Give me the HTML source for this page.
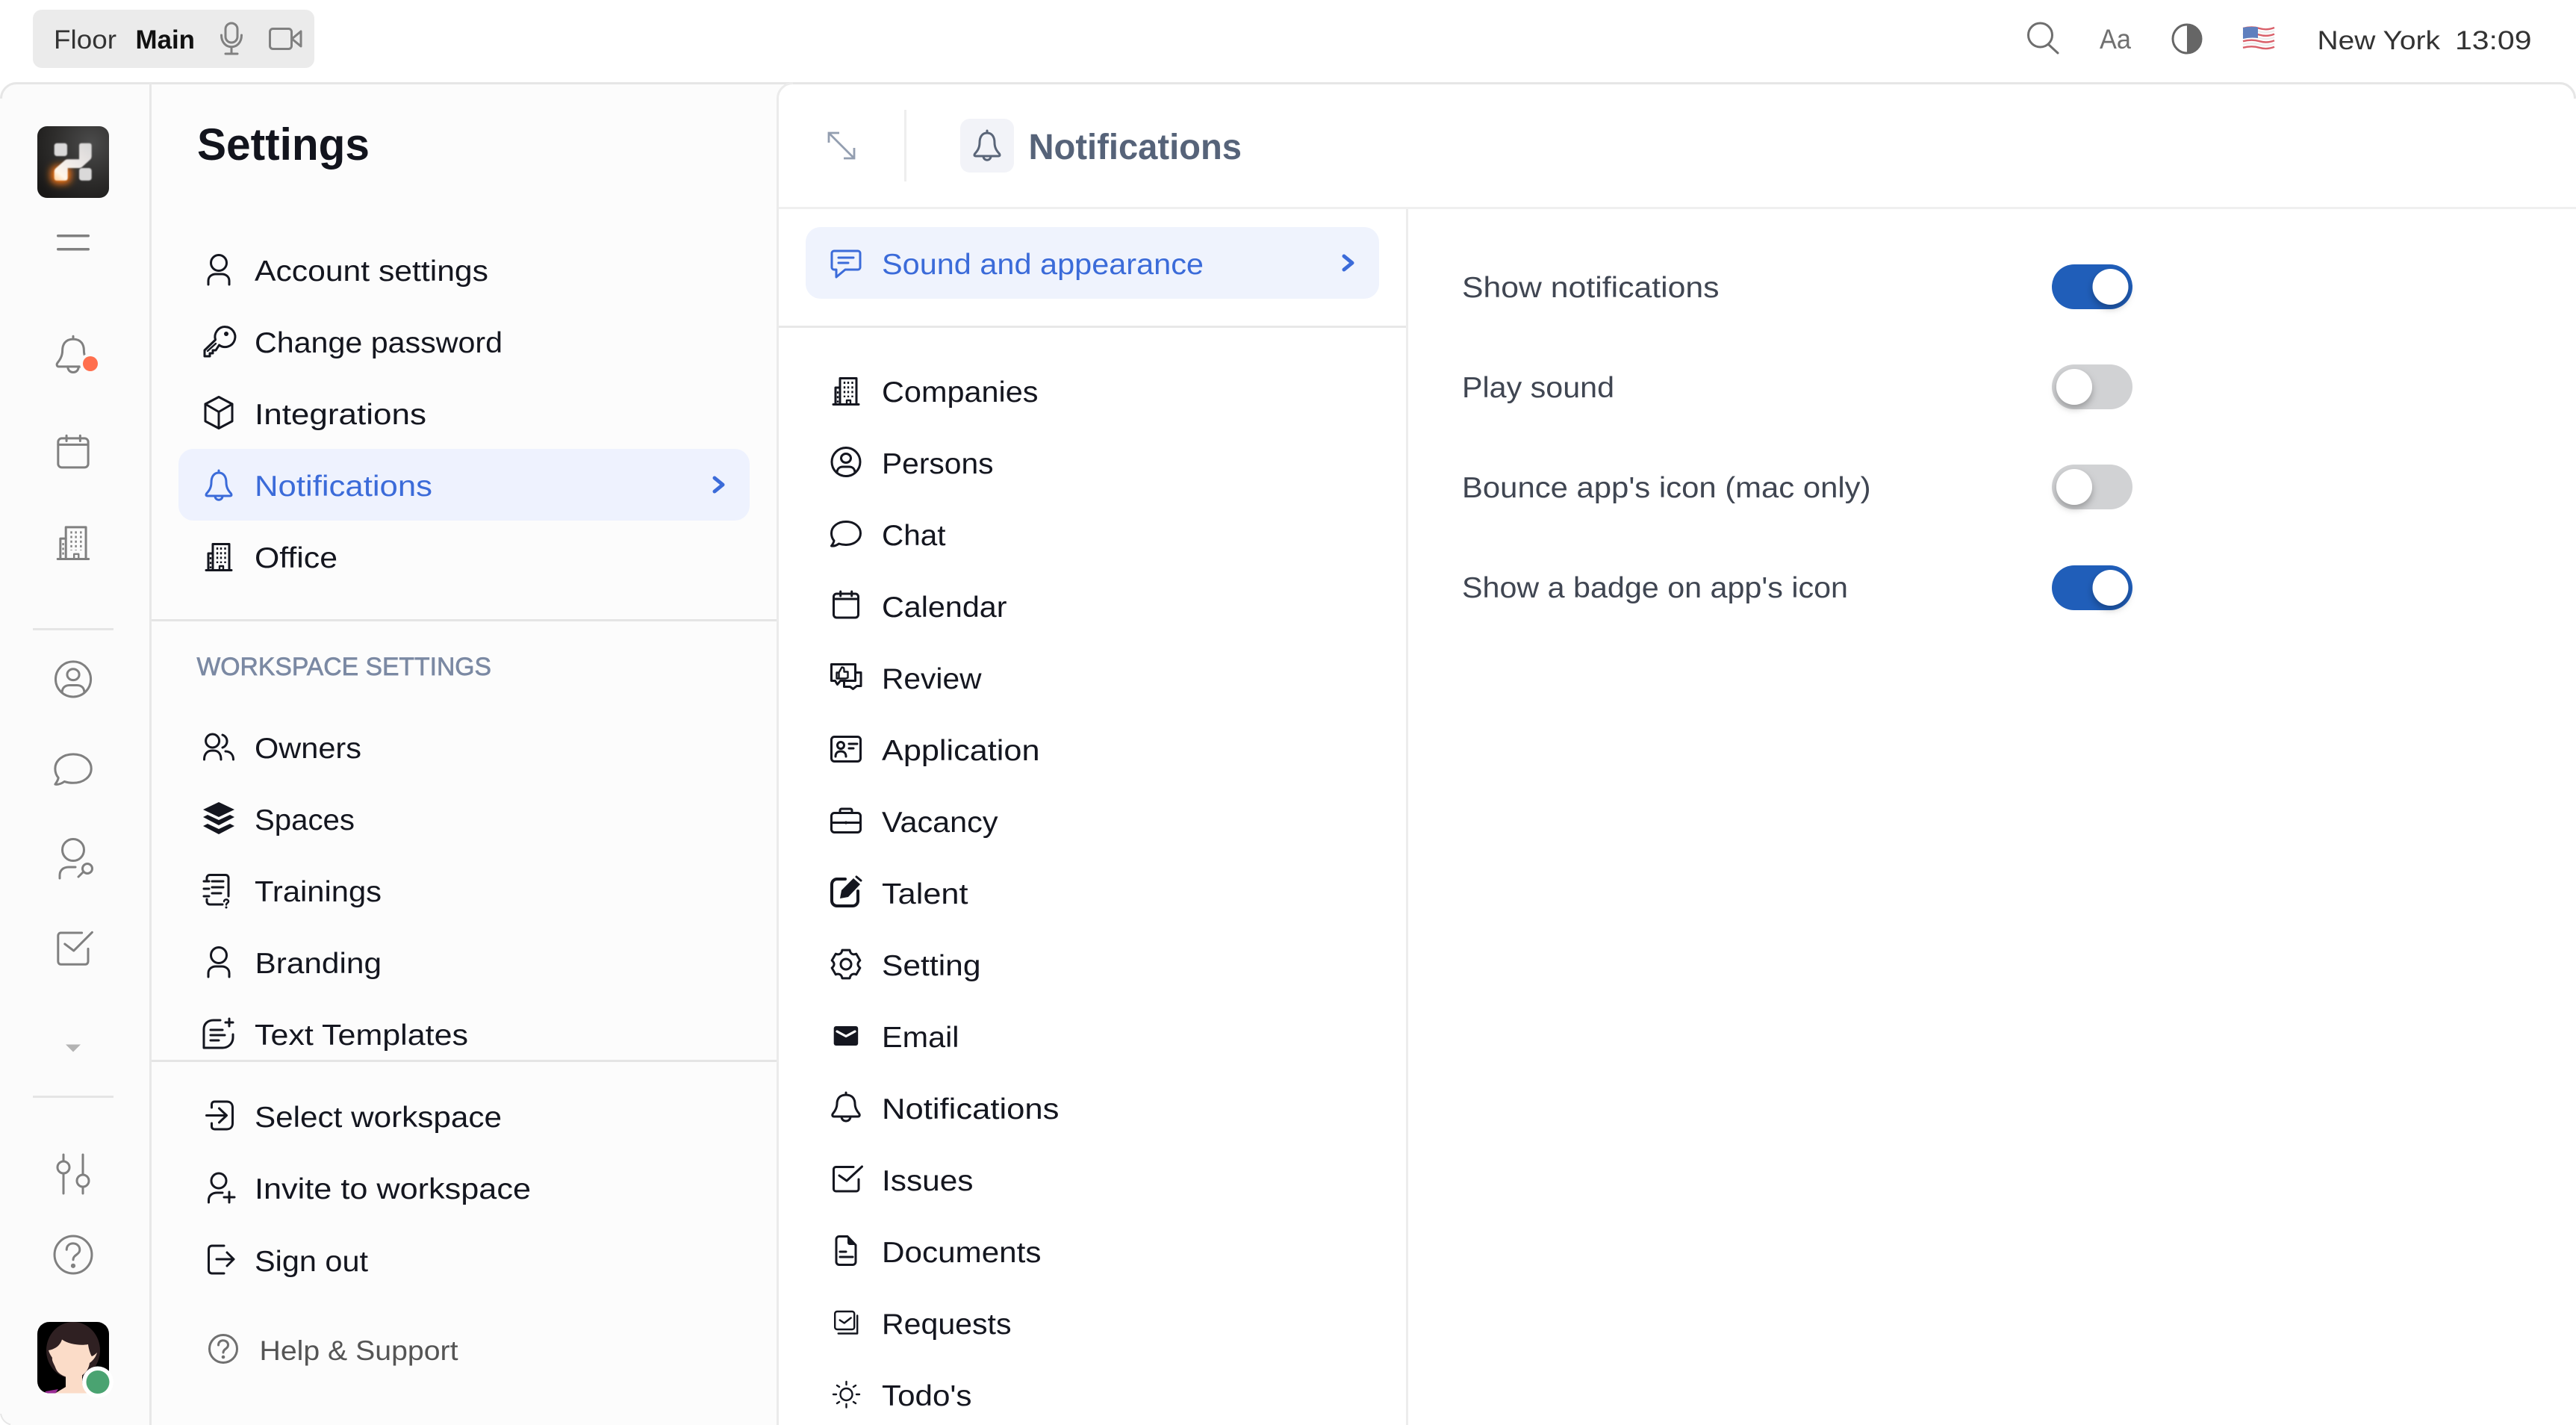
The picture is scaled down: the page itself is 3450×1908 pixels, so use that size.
<!DOCTYPE html>
<html lang="en">
<head>
<meta charset="utf-8">
<title>Settings - Notifications</title>
<style>
html,body{margin:0;padding:0;background:#fff;width:3450px;height:1908px;overflow:hidden}
svg{display:block}
text{font-family:"Liberation Sans",sans-serif;font-size:39px;fill:#14161f}
.b{font-weight:700}
.i,.i *{fill:none;stroke:currentColor;stroke-width:3;stroke-linecap:round;stroke-linejoin:round;vector-effect:non-scaling-stroke}
.i .f{fill:currentColor;stroke:none}
.i .d{stroke-linecap:butt;stroke-width:2.400;stroke-dasharray:3 3.200}
.i .t{stroke-width:2.400}
.i .h{stroke-width:4}
.lb{fill:#404652}
</style>
</head>
<body>
<svg xmlns="http://www.w3.org/2000/svg" width="3450" height="1908" viewBox="0 0 3450 1908">
<defs>
  <clipPath id="clipNav"><rect x="203" y="840" width="837" height="579"/></clipPath>
  <clipPath id="clipAv"><rect x="50" y="1770" width="96" height="95.500" rx="16"/></clipPath>
  <radialGradient id="lgBg" gradientUnits="userSpaceOnUse" cx="122" cy="192" r="90"><stop offset="0" stop-color="#4b4b4b"/><stop offset="0.55" stop-color="#2e2d2c"/><stop offset="1" stop-color="#191817"/></radialGradient>
  <linearGradient id="lgZ" gradientUnits="userSpaceOnUse" x1="118" y1="192" x2="76" y2="242"><stop offset="0" stop-color="#d9d8d8"/><stop offset=".5" stop-color="#eee9e7"/><stop offset=".85" stop-color="#fff6ea"/><stop offset="1" stop-color="#ffd6a6"/></linearGradient>
  <filter id="sh" x="-50%" y="-50%" width="200%" height="220%"><feDropShadow dx="0" dy="5" stdDeviation="5" flood-color="#000" flood-opacity=".28"/></filter>
  <filter id="bl4" x="-60%" y="-60%" width="220%" height="220%"><feGaussianBlur stdDeviation="5"/></filter>
  <filter id="bl1" x="-10%" y="-10%" width="120%" height="120%"><feGaussianBlur stdDeviation=".8"/></filter>

  <g id="bld" class="i"><path d="M1 36.5H35"/><path d="M10 36.5V1.5H32V36.5"/><path d="M4 36.5V14H10"/><path class="d" d="M16 6V27M21 6V27M26.5 6V27M7 19V34"/><path class="t" d="M19 36V31H24V36"/></g>
  <g id="pc" class="i"><circle cx="21" cy="20.5" r="19"/><ellipse cx="21" cy="15.5" rx="6.5" ry="6"/><path d="M9 35C9 30 12 27 17 27H25C30 27 33 30 33 35"/></g>
  <g id="chat" class="i"><path d="M21 1.5C32 1.5 40.5 8 40.5 17C40.5 26 32 32.5 21 32.5C17.5 32.5 14.5 32 11.5 31C8 33.5 4.5 34.5 1.5 34C3 32 4.5 29.5 5 27C2.5 24 1.5 20.5 1.5 17C1.5 8 10 1.5 21 1.5Z"/></g>
  <g id="cal" class="i"><rect x="1.5" y="4" width="33" height="32" rx="4"/><path d="M1.5 11H34.5M10.7 1V7M25.7 1V7"/></g>
  <g id="chk" class="i"><path d="M28 1.5H4.5A3 3 0 0 0 1.5 4.5V31A3 3 0 0 0 4.5 34H32A3 3 0 0 0 35 31V18"/><path d="M9 13L19 20L39.5 1"/></g>
  <g id="bell" class="i"><path d="M20 4C11 4 8 10 8 16C8 22 5 26 2.5 29C1 31 2 33 4 33H36C38 33 39 31 37.5 29C35 26 32 22 32 16C32 10 29 4 20 4Z"/><path d="M20 1V4"/><path d="M14 33C14 41 26 41 26 33"/></g>
  <g id="bell2" class="i"><path d="M20 4C13 4 10 10 10 17C10 25 6 29 3.5 32C2.5 34 3 35 5 35H35C37 35 37.5 34 36.5 32C34 29 30 25 30 17C30 10 27 4 20 4Z"/><path d="M20 1V4"/><path d="M15 35C15 42 25 42 25 35"/></g>
  <g id="usr" class="i"><circle cx="15" cy="11" r="10.5"/><path d="M1 40V35C1 29 6 26 11 26H19C24 26 29 29 29 35V40"/></g>
  <g id="help" class="i"><circle cx="20" cy="20" r="18.5"/><path d="M13.5 15C13.5 6.500 26.500 7 26.500 15C26.500 20 20 20 20 25"/><circle class="f" cx="20" cy="31" r="2.300"/></g>
</defs>

<!-- app panel -->
<path d="M0 132A22 22 0 0 1 22 110H1062V1908H14Q3 1905 0 1893Z" fill="#fcfcfc"/>
<path d="M0 132A22 22 0 0 1 22 110H200V1908H14Q3 1905 0 1893Z" fill="#fbfbfb"/>
<path d="M1.500 132A20.500 20.500 0 0 1 22 111.500H3428A20.500 20.500 0 0 1 3448.500 132" fill="none" stroke="#e6e6e6" stroke-width="3"/>
<path d="M1 1893Q3 1904 14 1907.500" fill="none" stroke="#e6e6e6" stroke-width="2"/>
<rect x="200" y="111" width="3" height="1797" fill="#e8e8e8"/>
<path d="M1041.500 1908V132A20.500 20.500 0 0 1 1062 111.500H3428A20.500 20.500 0 0 1 3450 132V1908Z" fill="#fff"/>
<path d="M1041.500 1908V132A20.500 20.500 0 0 1 1062 111.500H3428" fill="none" stroke="#ebebeb" stroke-width="3"/>
<path d="M1062 111.500H3428A20.500 20.500 0 0 1 3448.500 132" fill="none" stroke="#e6e6e6" stroke-width="3"/>

<!-- top bar -->
<rect x="44" y="13" width="377" height="78" rx="12" fill="#ebebeb"/>
<text x="72" y="65" style="font-size:35px;fill:#333" textLength="84" lengthAdjust="spacingAndGlyphs">Floor</text>
<text x="181.500" y="65" class="b" style="font-size:35px;fill:#111" textLength="79.500" lengthAdjust="spacingAndGlyphs">Main</text>
<g class="i" color="#808080">
  <rect x="302" y="31" width="16" height="26" rx="8"/>
  <path d="M296.500 47C296.500 68 323.500 68 323.500 47M310 64V72M302 72H318"/>
  <rect x="361.500" y="38.500" width="29" height="27" rx="4"/>
  <path d="M391 52L403 42V62Z"/>
</g>
<g class="i" color="#6e6e6e">
  <circle cx="2732.500" cy="47" r="16"/><path d="M2744 60L2756 71"/>
</g>
<text x="2812" y="65" style="font-size:37px;fill:#707070" textLength="42" lengthAdjust="spacingAndGlyphs">Aa</text>
<circle cx="2929" cy="52" r="19" fill="none" stroke="#666" stroke-width="3"/>
<path d="M2929 33A19 19 0 0 1 2929 71Z" fill="#666"/>
<!-- flag -->
<g fill="none" stroke-width="2.400">
  <path d="M3004 38Q3016 35 3026 38T3046 37" stroke="#d9606a"/>
  <path d="M3004 42.300Q3016 39.300 3026 42.300T3046 41.300" stroke="#eee"/>
  <path d="M3004 46.600Q3016 43.600 3026 46.600T3046 45.600" stroke="#d9606a"/>
  <path d="M3004 50.900Q3016 47.900 3026 50.900T3046 49.900" stroke="#eee"/>
  <path d="M3004 55.200Q3016 52.200 3026 55.200T3046 54.200" stroke="#d9606a"/>
  <path d="M3004 59.500Q3016 56.500 3026 59.500T3046 58.500" stroke="#eee"/>
  <path d="M3004 63.800Q3016 60.800 3026 63.800T3046 62.800" stroke="#d9606a"/>
</g>
<path d="M3004 37Q3014 35 3024 36.500V51Q3014 49.500 3004 52Z" fill="#5f7fbe"/>
<text x="3103.500" y="66" style="font-size:35px;fill:#333" textLength="164.500" lengthAdjust="spacingAndGlyphs">New York</text>
<text x="3288" y="66" style="font-size:35px;fill:#333" textLength="102.500" lengthAdjust="spacingAndGlyphs">13:09</text>

<!-- logo -->
<rect x="50" y="169" width="96" height="96" rx="13" fill="url(#lgBg)"/>
<g filter="url(#bl1)">
<rect x="72.700" y="191.700" width="17.300" height="17.300" rx="3.500" fill="#dad9d9"/>
<rect x="106" y="225" width="16.700" height="16.700" rx="3.500" fill="#dad9d9"/>
</g>
<rect x="68" y="222" width="27" height="24" rx="8" fill="#ff7a18" filter="url(#bl4)"/>
<path filter="url(#bl1)" d="M106 195Q106 191.700 109 191.700H119.500Q122.700 191.700 122.700 195V209Q122.700 212 120.500 214L110 223.500Q108.500 225 106.500 225H90.700V238Q90.700 241.700 87 241.700H76Q72.700 241.700 72.700 238V230Q72.700 227 75 225L87 214.500Q88.500 213.300 91 213.300H106Z" fill="url(#lgZ)"/>

<rect x="76" y="314" width="44" height="3.500" rx="1.700" fill="#808080"/>
<rect x="76" y="332" width="44" height="3.500" rx="1.700" fill="#808080"/>

<!-- sidebar icons -->
<g color="#808080">
  <use href="#bell" transform="translate(74 449) scale(1.2 1.27)"/>
  <circle cx="121" cy="487" r="14" fill="#fbfbfb"/>
  <circle cx="121" cy="487" r="10" fill="#ff6f4e"/>
  <use href="#cal" transform="translate(76 582) scale(1.22)"/>
  <use href="#bld" transform="translate(76 704) scale(1.22)"/>
  <use href="#pc" transform="translate(72 884) scale(1.24)"/>
  <use href="#chat" transform="translate(72 1008) scale(1.24)"/>
  <g class="i"><circle cx="98" cy="1138" r="14.500"/><path d="M80 1176V1172C80 1165 85 1161 92 1161H101"/><circle cx="117" cy="1163" r="6.500"/><path d="M111 1168L105 1174"/></g>
  <use href="#chk" transform="translate(76 1247) scale(1.2 1.3)"/>
  <g class="i"><path d="M85 1546V1555M85 1571V1598M111 1546V1573M111 1589V1598"/><circle cx="85" cy="1563" r="8"/><circle cx="111" cy="1581" r="8"/></g>
  <use href="#help" transform="translate(71 1653) scale(1.35)"/>
</g>
<rect x="44" y="841" width="108" height="3" fill="#e5e5e5"/>
<path d="M88 1398.500H108L98 1408.500Z" fill="#b3b3b3"/>
<rect x="44" y="1467" width="108" height="3" fill="#e5e5e5"/>

<!-- avatar -->
<g clip-path="url(#clipAv)">
<rect x="50" y="1770" width="96" height="96" fill="#000"/>
<ellipse cx="98" cy="1808" rx="36" ry="38" fill="#2f2022"/>
<path d="M88 1838H110V1852L122 1858L136 1866H73L88 1857Z" fill="#fbdcc8"/>
<path d="M61 1863L78 1860L74 1866H60Z" fill="#9a2d95"/>
<path d="M65 1808C76 1806 81 1800 83 1793.500C92 1800 108 1802 118 1800C119 1808 122 1815 123 1816C126 1815 128 1813 130 1811C128 1818 124 1822 120 1825C118 1838 108 1845 98 1845C88 1845 78 1840 75 1833C73 1827 69 1822 70 1818C68 1815 66 1812 65 1808Z" fill="#fbdcc8"/>
</g>
<circle cx="131" cy="1850.500" r="21" fill="#fff"/>
<circle cx="131" cy="1850.500" r="15.500" fill="#4aa371"/>

<!-- settings column -->
<text x="264" y="214" class="b" style="font-size:60px;fill:#12141d" textLength="231" lengthAdjust="spacingAndGlyphs">Settings</text>

<rect x="239" y="601" width="765" height="96" rx="20" fill="#eef2fe"/>

<text x="341" y="376" textLength="313" lengthAdjust="spacingAndGlyphs">Account settings</text>
<text x="341" y="472" textLength="332" lengthAdjust="spacingAndGlyphs">Change password</text>
<text x="341" y="568" textLength="230" lengthAdjust="spacingAndGlyphs">Integrations</text>
<text x="341" y="664" textLength="238" lengthAdjust="spacingAndGlyphs" style="fill:#3b6bd9">Notifications</text>
<text x="341" y="760" textLength="111" lengthAdjust="spacingAndGlyphs">Office</text>

<g color="#14161f">
  <use href="#usr" transform="translate(278 341)"/>
  <g class="i" transform="translate(272 436)"><path d="M16.500 19L2 33V41H9V37H13V33H17L21.500 26A13.500 13.500 0 1 0 16.500 19Z"/><circle class="f" cx="31" cy="11" r="3"/><path class="t" d="M6 34L17 24"/></g>
  <g class="i" transform="translate(273 530)"><path d="M20 1.500L38 11V34L20 43.500L2 34V11Z"/><path d="M2 11L20 21.500L38 11M20 21.500V43.500"/></g>
  <use href="#bell2" transform="translate(273 629)" color="#3b6bd9"/>
  <use href="#bld" transform="translate(275 727)"/>
</g>
<path d="M957 640L968 649L957 658" fill="none" stroke="#3b6bd9" stroke-width="5" stroke-linecap="round" stroke-linejoin="round"/>

<rect x="203" y="829" width="837" height="3" fill="#e5e5e5"/>
<text x="263.500" y="904" style="font-size:34px;fill:#7b89a3;stroke:#7b89a3;stroke-width:.7" textLength="394.500" lengthAdjust="spacingAndGlyphs">WORKSPACE SETTINGS</text>

<g clip-path="url(#clipNav)">
  <text x="341" y="1015" textLength="143" lengthAdjust="spacingAndGlyphs">Owners</text>
  <text x="341" y="1111" textLength="134" lengthAdjust="spacingAndGlyphs">Spaces</text>
  <text x="341" y="1207" textLength="170" lengthAdjust="spacingAndGlyphs">Trainings</text>
  <text x="341.500" y="1303" textLength="169.500" lengthAdjust="spacingAndGlyphs">Branding</text>
  <text x="341" y="1399" textLength="286" lengthAdjust="spacingAndGlyphs">Text Templates</text>
</g>
<g color="#14161f">
  <g class="i" transform="translate(272 982)"><circle cx="12.600" cy="10" r="9"/><path d="M1.500 35C1.500 27 6 23 12 23H14C20 23 24 27 24 35"/><path d="M26 2A9 9 0 0 1 26 19"/><path d="M30 24C36 24 40.500 28 40.500 35"/></g>
  <g class="i" transform="translate(272 1074)"><path class="f" d="M21 0L42 10L21 20L0 10Z"/><path class="f" d="M0 20L6 17L21 24L36 17L42 20L21 31Z"/><path class="f" d="M0 32L6 29L21 36L36 29L42 32L21 43Z"/></g>
  <g class="i" transform="translate(272 1170)"><path d="M5 8V5.500A4 4 0 0 1 9 1.500H30A4 4 0 0 1 34 5.500V30M26 41H9A4 4 0 0 1 5 37V34"/><path d="M12 10H27M12 18H27M12 26H24M1 10H8M1 20H8M1 30H8"/><path class="t" d="M28 37C28 33.500 34 33.500 34 37C34 39 31 39 31 41.500"/><circle class="f" cx="31" cy="45" r="1.500"/></g>
  <use href="#usr" transform="translate(278 1268)"/>
  <g class="i" transform="translate(271 1363)"><path d="M24 3H15C7 3 2 8 2 15V40H27C35 40 41 34 41 26V22"/><path d="M11 16H27M11 23H30M11 30H22M36 1V11M31 6H41"/></g>
</g>
<rect x="203" y="1419" width="837" height="3" fill="#e5e5e5"/>

<text x="341" y="1509" textLength="331" lengthAdjust="spacingAndGlyphs">Select workspace</text>
<text x="341" y="1605" textLength="370" lengthAdjust="spacingAndGlyphs">Invite to workspace</text>
<text x="341" y="1702" textLength="152" lengthAdjust="spacingAndGlyphs">Sign out</text>
<text x="347.500" y="1821" style="font-size:37px;fill:#555" textLength="266" lengthAdjust="spacingAndGlyphs">Help &amp; Support</text>
<g color="#14161f">
  <g class="i" transform="translate(275.500 1473)"><path d="M8 10V6C8 3 10 2 12 2H28C33 2 36 5 36 10V31C36 36 33 39 28 39H12C10 39 8 38 8 35V31"/><path d="M1 20.500H27M18 11L28 20.500L18 30"/></g>
  <g class="i" transform="translate(278 1570)"><circle cx="15" cy="11" r="10"/><path d="M1.500 40V37C1.500 30 7 27 13 27H20M29 26V40M22 33H36"/></g>
  <g class="i" transform="translate(278 1666)"><path d="M22 2H6C3 2 1.500 4 1.500 7V34C1.500 37 3 39 6 39H22"/><path d="M12 20H35M26 11L35 20L26 29"/></g>
</g>
<use href="#help" transform="translate(279 1786)" color="#707070"/>

<!-- header of right panel -->
<path d="M1110 191V178H1124M1110 178L1144 212M1144 198V212H1130" fill="none" stroke="#939eb0" stroke-width="2.800" stroke-linecap="butt" stroke-linejoin="miter"/>
<rect x="1211" y="147" width="3" height="96" fill="#eeeeee"/>
<rect x="1286" y="159" width="72" height="72" rx="13" fill="#f2f3f8"/>
<use href="#bell2" transform="translate(1302 174)" color="#5a6578"/>
<text x="1377.500" y="213" class="b" style="font-size:48px;fill:#566379" textLength="285.500" lengthAdjust="spacingAndGlyphs">Notifications</text>
<rect x="1043" y="277" width="2407" height="3" fill="#efefef"/>
<rect x="1883" y="280" width="3" height="1628" fill="#ededed"/>

<!-- second nav -->
<rect x="1079" y="304" width="768" height="96" rx="20" fill="#eff3fd"/>
<g class="i" color="#3b6bd9" transform="translate(1112 334)"><path d="M5 2H37A3 3 0 0 1 40 5V24A3 3 0 0 1 37 27H20L8 37V27H5A3 3 0 0 1 2 24V5A3 3 0 0 1 5 2Z"/><path d="M11 11H31M11 18H24"/></g>
<text x="1181" y="367" textLength="431" lengthAdjust="spacingAndGlyphs" style="fill:#3b6bd9">Sound and appearance</text>
<path d="M1800 343L1811 352L1800 361" fill="none" stroke="#3b6bd9" stroke-width="5" stroke-linecap="round" stroke-linejoin="round"/>
<rect x="1043" y="436" width="840" height="3" fill="#e8e8e8"/>

<text x="1181" y="538" textLength="209.500" lengthAdjust="spacingAndGlyphs">Companies</text>
<text x="1181" y="634" textLength="149.500" lengthAdjust="spacingAndGlyphs">Persons</text>
<text x="1181" y="730" textLength="85.500" lengthAdjust="spacingAndGlyphs">Chat</text>
<text x="1181" y="826" textLength="167.500" lengthAdjust="spacingAndGlyphs">Calendar</text>
<text x="1181" y="922" textLength="133.500" lengthAdjust="spacingAndGlyphs">Review</text>
<text x="1181" y="1018" textLength="211.500" lengthAdjust="spacingAndGlyphs">Application</text>
<text x="1181" y="1114" textLength="155.500" lengthAdjust="spacingAndGlyphs">Vacancy</text>
<text x="1181" y="1210" textLength="115.500" lengthAdjust="spacingAndGlyphs">Talent</text>
<text x="1181" y="1306" textLength="132.500" lengthAdjust="spacingAndGlyphs">Setting</text>
<text x="1181" y="1402" textLength="103.500" lengthAdjust="spacingAndGlyphs">Email</text>
<text x="1181" y="1498" textLength="237.500" lengthAdjust="spacingAndGlyphs">Notifications</text>
<text x="1181" y="1594" textLength="122.500" lengthAdjust="spacingAndGlyphs">Issues</text>
<text x="1181" y="1690" textLength="213.500" lengthAdjust="spacingAndGlyphs">Documents</text>
<text x="1181" y="1786" textLength="173.500" lengthAdjust="spacingAndGlyphs">Requests</text>
<text x="1181" y="1882" textLength="120.500" lengthAdjust="spacingAndGlyphs">Todo's</text>

<g color="#14161f">
  <use href="#bld" transform="translate(1115 505)"/>
  <use href="#pc" transform="translate(1112 598)"/>
  <use href="#chat" transform="translate(1112 697)"/>
  <use href="#cal" transform="translate(1115 791)"/>
  <g class="i" transform="translate(1111.500 887.500)"><path d="M2 2H34V24H14L10 29L7 24H2Z"/><path d="M34 13H41.500V31H36L31 35L27 32H19V24"/><path class="t" d="M12 21H9V13H12ZM12 13L16 6C18 6 19 7 19 9V12H24V20L21 21H12"/></g>
  <g class="i" transform="translate(1112 985)"><rect x="1.500" y="1.500" width="39" height="33" rx="4"/><circle cx="14" cy="13" r="4.500"/><path d="M7 28C7 23 10 21 14 21S21 23 21 28"/><path d="M25 11H36M25 17H31"/></g>
  <g class="i" transform="translate(1112 1081.500)"><rect x="1.500" y="7" width="39" height="26" rx="4"/><path d="M1.500 20H40.500M13 7V3.500A2 2 0 0 1 15 1.500H27A2 2 0 0 1 29 3.500V7"/><circle class="f" cx="21" cy="20" r="2"/></g>
  <g class="i" transform="translate(1112 1173)"><path class="h" d="M20 4H9A7 7 0 0 0 2 11V33A7 7 0 0 0 9 40H30A7 7 0 0 0 37 33V20"/><path class="f" d="M13 30L15 19L31 3L40 11L24 28Z"/><path d="M35 1L41 6"/></g>
  <g class="i" transform="translate(1113 1270)"><path d="M14.950 2.160L25.050 2.160Q26.500 9.740 33.790 7.210L38.840 15.950Q33 21 38.840 26.050L33.790 34.790Q26.500 32.260 25.050 39.840L14.950 39.840Q13.500 32.260 6.210 34.790L1.160 26.050Q7 21 1.160 15.950L6.210 7.210Q13.500 9.740 14.950 2.160Z"/><circle cx="20" cy="21" r="7"/></g>
  <rect x="1116.700" y="1374" width="32.500" height="26" rx="3" fill="#14161f"/>
  <path d="M1121 1381L1133 1387.500L1145 1381" fill="none" stroke="#fff" stroke-width="3.200" stroke-linecap="round" stroke-linejoin="round"/>
  <use href="#bell" transform="translate(1113 1462)"/>
  <use href="#chk" transform="translate(1115 1561)"/>
  <g class="i" transform="translate(1118 1654)"><path d="M17 1.500H6A4 4 0 0 0 2 5.500V35.500A4 4 0 0 0 6 39.500H24A4 4 0 0 0 28 35.500V13Z"/><path class="f" d="M17 2L28 13H20A3 3 0 0 1 17 10Z"/><path d="M7 22H15M7 29H24"/></g>
  <g class="i" transform="translate(1116.700 1754.500)"><rect class="t" x="1.500" y="1.500" width="26" height="24" rx="3"/><path class="t" d="M6 31H31.500V7"/><path class="t" d="M8 13L14 17L23 10"/></g>
  <g class="i" transform="translate(1115 1849)"><circle class="t" cx="18.500" cy="18" r="8"/><path class="t" d="M18.500 1V5M18.500 31V35.500M1 18H5M32 18H36M6 6L9 8M31 6L28 8M6 30L9 28M31 30L28 28"/></g>
</g>

<!-- notifications settings -->
<text x="1958" y="398" class="lb" textLength="344.500" lengthAdjust="spacingAndGlyphs">Show notifications</text>
<text x="1958" y="532" class="lb" textLength="204" lengthAdjust="spacingAndGlyphs">Play sound</text>
<text x="1958" y="666" class="lb" textLength="547.500" lengthAdjust="spacingAndGlyphs">Bounce app's icon (mac only)</text>
<text x="1958" y="800" class="lb" textLength="517" lengthAdjust="spacingAndGlyphs">Show a badge on app's icon</text>

<rect x="2748" y="354" width="108" height="60" rx="30" fill="#205eb9"/>
<circle cx="2826.500" cy="384" r="24" fill="#fff" filter="url(#sh)"/>
<rect x="2748" y="488" width="108" height="60" rx="30" fill="#d1d2d4"/>
<circle cx="2778" cy="518" r="24" fill="#fff" filter="url(#sh)"/>
<rect x="2748" y="622" width="108" height="60" rx="30" fill="#d1d2d4"/>
<circle cx="2778" cy="652" r="24" fill="#fff" filter="url(#sh)"/>
<rect x="2748" y="757" width="108" height="60" rx="30" fill="#205eb9"/>
<circle cx="2826.500" cy="787" r="24" fill="#fff" filter="url(#sh)"/>
</svg>
</body>
</html>
